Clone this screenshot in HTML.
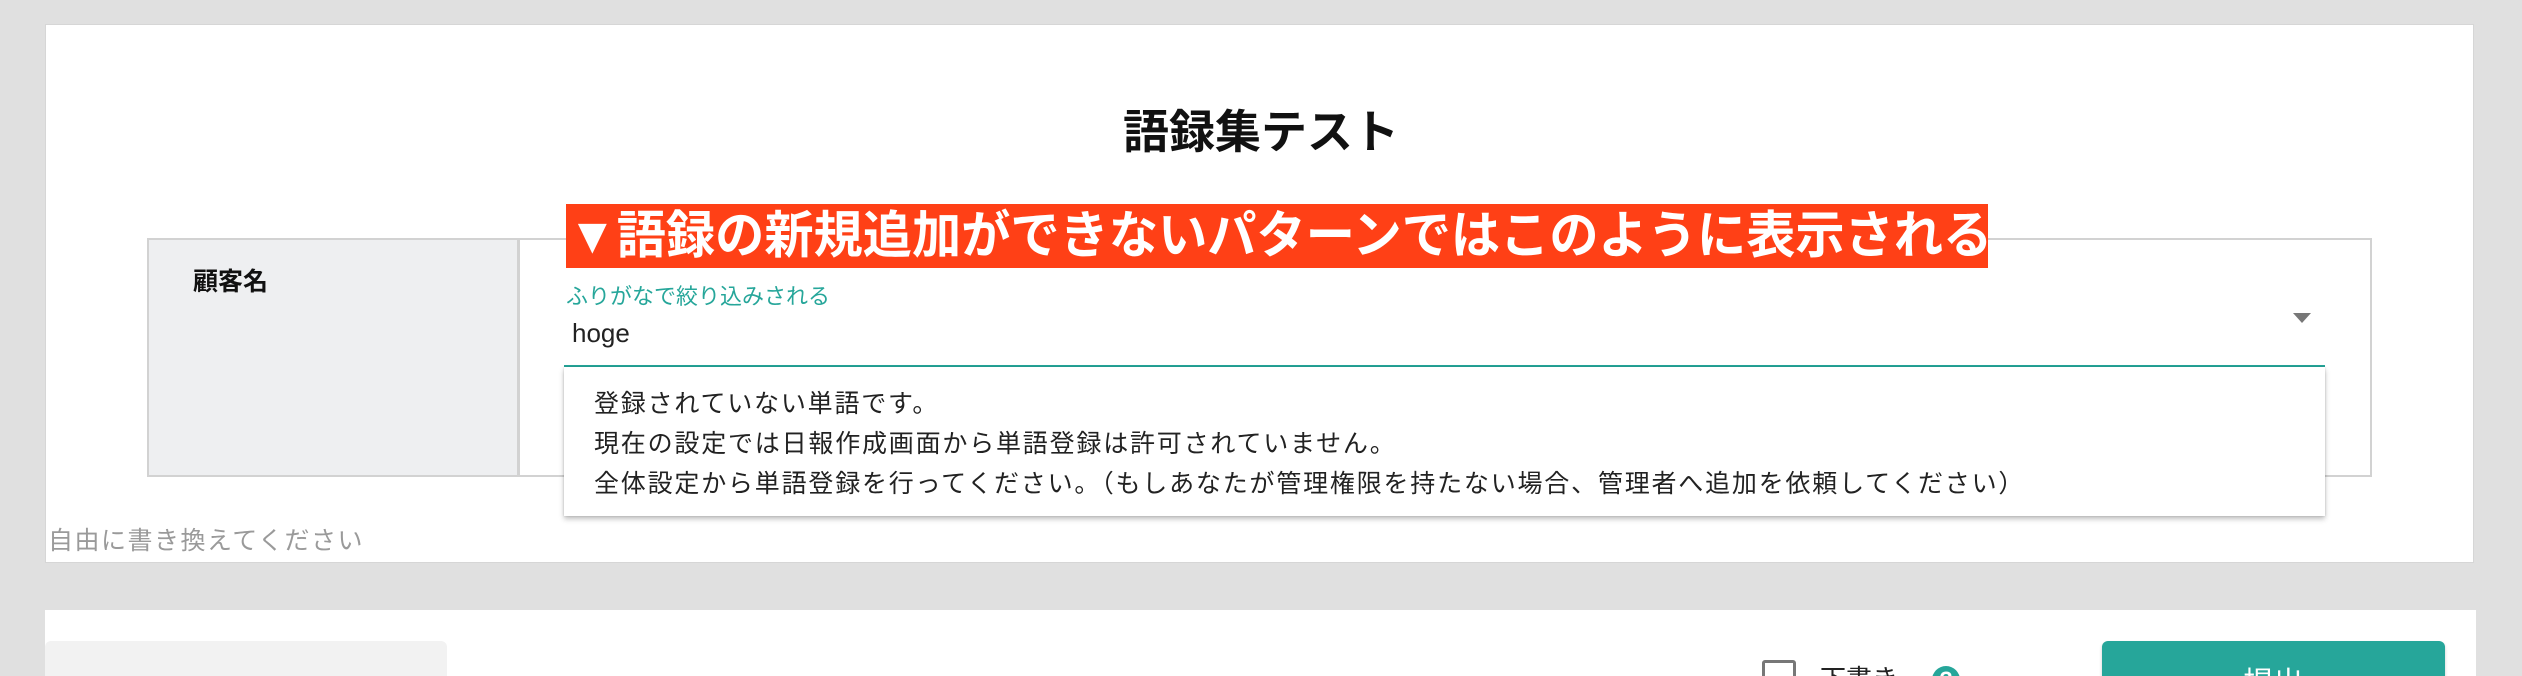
<!DOCTYPE html>
<html><head><meta charset="utf-8"><style>
html,body{margin:0;padding:0;width:2522px;height:676px;overflow:hidden;}
#w{position:relative;width:2522px;height:676px;overflow:hidden;background:#e0e0e0;font-family:"Liberation Sans","Noto Sans CJK JP",sans-serif;}
.a{position:absolute;white-space:nowrap;}
</style></head><body><div id="w">
<div class="a" style="left:45px;top:24px;width:2429px;height:539px;background:#fff;border:1px solid #d6d6d6;box-sizing:border-box"></div>
<div class="a" style="left:0;top:104px;width:2522px;text-align:center;font-size:46px;font-weight:bold;color:#111;line-height:56px">語録集テスト</div>
<div class="a" style="left:147px;top:238px;width:2225px;height:239px;border:2px solid #d2d2d2;box-sizing:border-box;background:#fff"></div>
<div class="a" style="left:149px;top:240px;width:368px;height:235px;background:#eeeff1;border-right:3px solid #d2d2d2"></div>
<div class="a" style="left:193px;top:264px;font-size:25px;font-weight:bold;color:#111;line-height:36px">顧客名</div>
<div class="a" style="left:566px;top:283px;font-size:22px;color:#26a69a;line-height:28px">ふりがなで絞り込みされる</div>
<div class="a" style="left:572px;top:316px;font-size:26px;color:#222;line-height:34px">hoge</div>
<div class="a" style="left:2293px;top:313px;width:0;height:0;border-left:9px solid transparent;border-right:9px solid transparent;border-top:10px solid #777"></div>
<div class="a" style="left:564px;top:365px;width:1761px;height:2px;background:#26a69a"></div>
<div class="a" style="left:564px;top:367px;width:1761px;height:149px;background:#fff;box-shadow:0 3px 5px rgba(0,0,0,.25),0 0 2px rgba(0,0,0,.15)"></div>
<div class="a" style="left:594px;top:384px;font-size:25px;color:#222;line-height:40px;letter-spacing:1.8px">登録されていない単語です。<br>現在の設定では日報作成画面から単語登録は許可されていません。<br>全体設定から単語登録を行ってください。（もしあなたが管理権限を持たない場合、管理者へ追加を依頼してください）</div>
<div class="a" style="left:566px;top:204px;width:1422px;height:64px;background:#ff4016"></div>
<div class="a" style="left:568px;top:204px;font-size:51px;font-weight:bold;color:#fff;line-height:64px;transform-origin:0 0;transform:scaleX(0.965)">▼語録の新規追加ができないパターンではこのように表示される</div>
<div class="a" style="left:48px;top:524px;font-size:25px;color:#9a9a9a;line-height:34px;letter-spacing:1.5px">自由に書き換えてください</div>
<div class="a" style="left:45px;top:610px;width:2431px;height:66px;background:#fff"></div>
<div class="a" style="left:45px;top:641px;width:402px;height:35px;background:#f2f2f2;border-radius:6px 6px 0 0"></div>
<div class="a" style="left:1762px;top:660px;width:34px;height:34px;border:3px solid #777;border-radius:3px;box-sizing:border-box"></div>
<div class="a" style="left:1820px;top:662px;font-size:26px;color:#222;line-height:34px">下書き</div>
<div class="a" style="left:1932px;top:666px;width:28px;height:28px;border-radius:50%;background:#26a69a;color:#fff;font-size:22px;font-weight:bold;text-align:center;line-height:28px">?</div>
<div class="a" style="left:2102px;top:641px;width:343px;height:35px;background:#26a69a;border-radius:6px 6px 0 0;box-shadow:0 2px 3px rgba(0,0,0,.2)"></div>
<div class="a" style="left:2102px;top:666px;width:343px;color:#fff;font-size:30px;text-align:center;line-height:36px">提出</div>
</div></body></html>
